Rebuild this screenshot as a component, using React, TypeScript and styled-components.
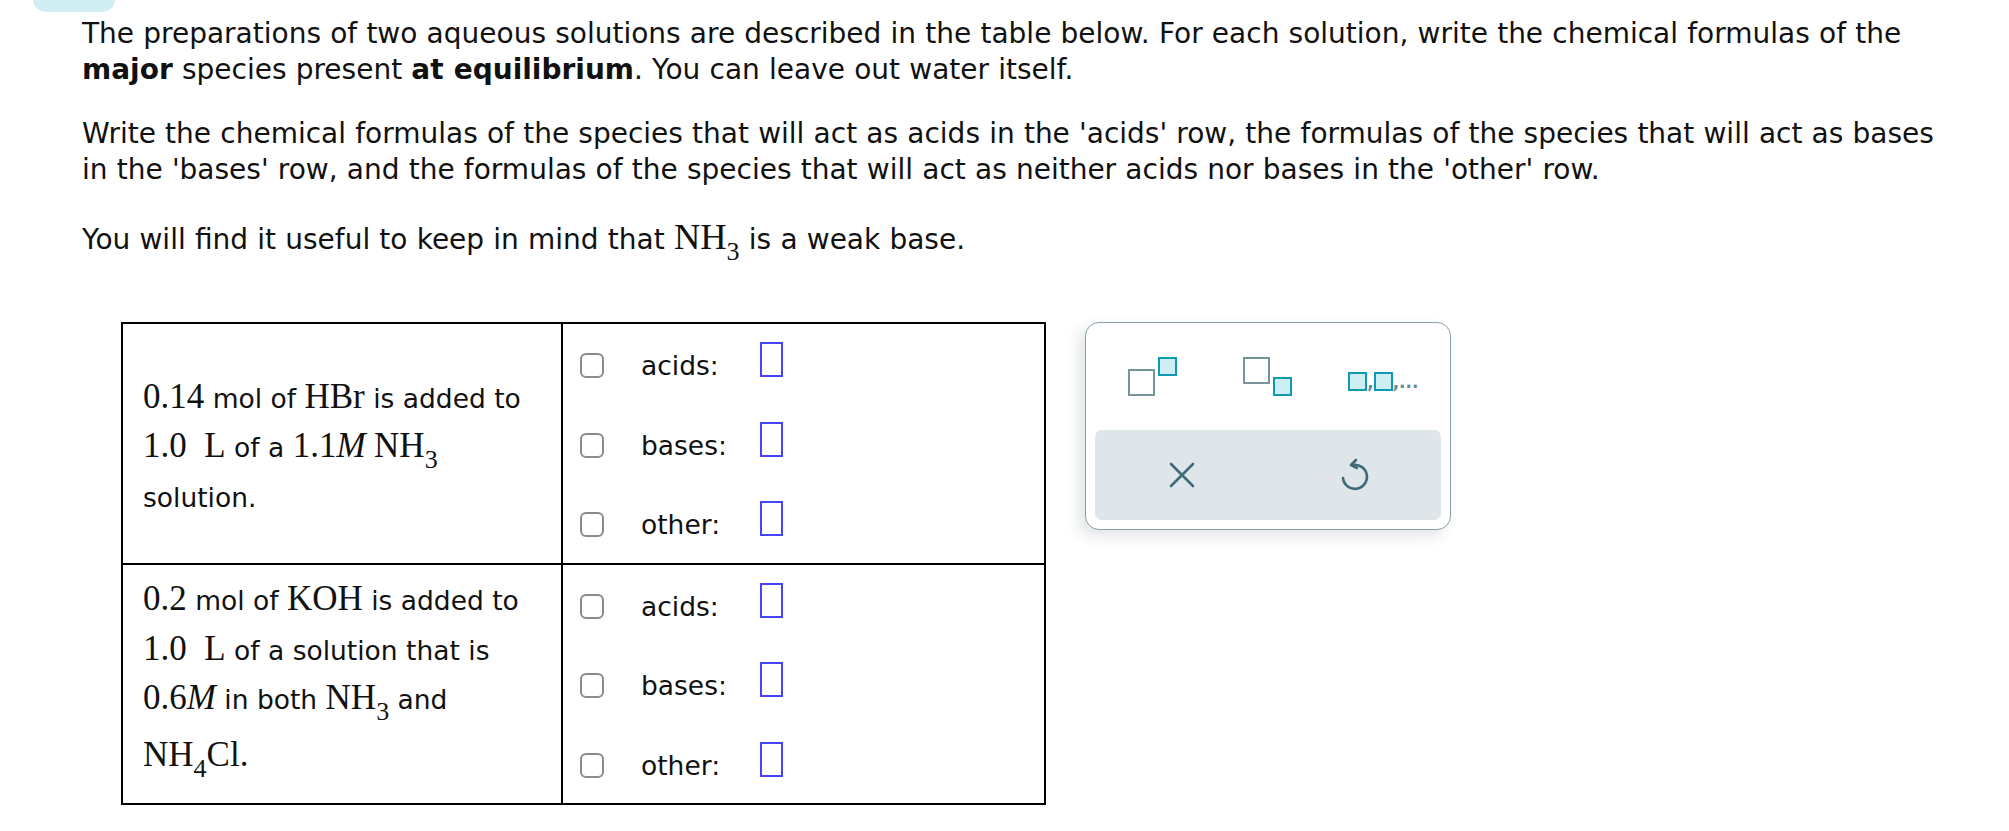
import styled, { createGlobalStyle } from 'styled-components'

const GlobalStyle = createGlobalStyle`
  body {
    margin: 0;
    background: #fff;
    color: #111;
    font-family: 'DejaVu Sans', Verdana, sans-serif;
  }
`

const Page = styled.div`
  display: flex;
  flex-direction: column;
`

const Tab = styled.div`
  width: 82px;
  height: 12px;
  margin-left: 33px;
  background: #d0eef3;
  border-radius: 0 0 14px 14px / 0 0 12px 12px;
`

const Math = styled.span<{ $it?: boolean }>`
  font-family: 'Liberation Serif', 'Times New Roman', serif;
  font-size: 35px;
  line-height: 1;
  font-style: ${(p) => (p.$it ? 'italic' : 'normal')};
  word-spacing: 0;
`

// tall formula that pushes its line down a little, as the typeset block does
const TallMath = styled(Math)`
  display: inline-block;
  padding-top: 12px;
`

const Sub = styled.sub`
  font-size: 26px;
  vertical-align: -11px;
  line-height: 0;
`

const Prompt = styled.div`
  padding-left: 82px;
  padding-top: 4px;
  width: 1870px;
  font-size: 28px;
  line-height: 36px;
  word-spacing: 0.3px;
  p {
    margin: 0 0 28px;
  }
  p:last-child {
    margin-top: 31px;
  }
  ${Math} {
    font-size: 36.5px;
  }
`

const Work = styled.div`
  display: flex;
  align-items: flex-start;
  gap: 39px;
  margin: 36px 0 0 121px;
`

const Table = styled.table`
  border-collapse: collapse;
  table-layout: fixed;
  font-size: 26.5px;
  td {
    border: 2px solid #000;
    padding: 0;
    vertical-align: middle;
  }
`

const Prep = styled.td<{ $nudge: 'down' | 'up' }>`
  width: 398px;
  padding: ${(p) => (p.$nudge === 'down' ? '9px 20px 0' : '0 20px 10px')} !important;
  line-height: 49.5px;
`

const Answers = styled.td`
  width: 481px;
`

const Option = styled.div`
  display: flex;
  align-items: center;
  box-sizing: border-box;
  height: 79.5px;
  padding: 4px 0 0 17px;
`

const Check = styled.span`
  width: 24px;
  height: 25px;
  box-sizing: border-box;
  border: 2px solid #8b8b8b;
  border-radius: 6px;
  margin-right: 37px;
`

const Label = styled.span`
  width: 119px;
`

const Slot = styled.span`
  width: 23px;
  height: 35px;
  box-sizing: border-box;
  border: 2px solid #4545ff;
  margin-bottom: 12px;
`

const Palette = styled.div`
  width: 366px;
  height: 208px;
  box-sizing: border-box;
  border: 1.5px solid #86a1a8;
  border-radius: 14px;
  background: #fff;
  box-shadow: -6px 6px 14px rgba(70, 90, 100, 0.16);
  display: flex;
  flex-direction: column;
  padding: 0 9px 9px;
`

const Tools = styled.div`
  height: 107px;
  display: grid;
  grid-template-columns: repeat(3, 1fr);
  align-items: center;
  justify-items: center;
`

const Glyph = styled.span<{ $align: 'sup' | 'sub' }>`
  display: inline-flex;
  gap: 3px;
  height: 39px;
  align-items: ${(p) => (p.$align === 'sup' ? 'flex-end' : 'flex-start')};
  & > span:last-child {
    align-self: ${(p) => (p.$align === 'sup' ? 'flex-start' : 'flex-end')};
  }
`

const Box = styled.span<{ $small?: boolean }>`
  display: inline-block;
  box-sizing: border-box;
  width: ${(p) => (p.$small ? 19 : 27)}px;
  height: ${(p) => (p.$small ? 19 : 27)}px;
  border: 2.6px solid ${(p) => (p.$small ? '#0b9bb3' : '#77939b')};
  background: ${(p) => (p.$small ? '#cdeef3' : '#fff')};
`

const ListGlyph = styled.span`
  display: inline-flex;
  align-items: flex-end;
  font-size: 17px;
  font-weight: bold;
  color: #6b8a92;
  line-height: 1;
  margin-top: 10px;
`

const Actions = styled.div`
  flex: 1;
  display: grid;
  grid-template-columns: 1fr 1fr;
  align-items: center;
  justify-items: center;
  background: #dfe6e9;
  border-radius: 7px;
`

const IconButton = styled.button`
  border: 0;
  background: transparent;
  padding: 0;
  display: flex;
  color: #3f6b78;
`

const CloseIcon = () => (
  <svg width="26" height="26" viewBox="0 0 26 26" fill="none" stroke="currentColor" strokeWidth="2.6" strokeLinecap="round">
    <path d="M2 2 L24 24 M24 2 L2 24" />
  </svg>
)

const UndoIcon = () => (
  <svg width="30" height="34" viewBox="0 0 30 34" fill="none" stroke="currentColor" strokeWidth="2.6" strokeLinecap="round" strokeLinejoin="round">
    <path d="M13 7 A12 12 0 1 1 3 20" />
    <path d="M16 2 L11 7 L17 10" />
  </svg>
)

const options = ['acids:', 'bases:', 'other:']

const AnswerCell = () => (
  <Answers>
    {options.map((o) => (
      <Option key={o}>
        <Check />
        <Label>{o}</Label>
        <Slot />
      </Option>
    ))}
  </Answers>
)

const App = () => {
  return (
    <>
      <GlobalStyle />
      <Page>
        <Tab />
        <Prompt>
          <p>
            The preparations of two aqueous solutions are described in the table below. For each solution, write the
            chemical formulas of the <b>major</b> species present <b>at equilibrium</b>. You can leave out water itself.
          </p>
          <p>
            Write the chemical formulas of the species that will act as acids in the 'acids' row, the formulas of the
            species that will act as bases in the 'bases' row, and the formulas of the species that will act as neither
            acids nor bases in the 'other' row.
          </p>
          <p>
            You will find it useful to keep in mind that{' '}
            <Math>
              NH<Sub>3</Sub>
            </Math>{' '}
            is a weak base.
          </p>
        </Prompt>
        <Work>
          <Table>
            <tbody>
              <tr>
                <Prep $nudge="down">
                  <Math>0.14</Math> mol of <Math>HBr</Math> is added to <Math>1.0&nbsp;&nbsp;L</Math> of a{' '}
                  <Math>1.1</Math>
                  <Math $it>M</Math>{' '}
                  <Math>
                    NH<Sub>3</Sub>
                  </Math>{' '}
                  solution.
                </Prep>
                <AnswerCell />
              </tr>
              <tr>
                <Prep $nudge="up">
                  <Math>0.2</Math> mol of <Math>KOH</Math> is added to <Math>1.0&nbsp;&nbsp;L</Math> of a solution that is{' '}
                  <Math>0.6</Math>
                  <Math $it>M</Math> in both{' '}
                  <Math>
                    NH<Sub>3</Sub>
                  </Math>{' '}
                  and{' '}
                  <TallMath>
                    NH<Sub>4</Sub>Cl.
                  </TallMath>
                </Prep>
                <AnswerCell />
              </tr>
            </tbody>
          </Table>
          <Palette>
            <Tools>
              <Glyph $align="sup">
                <Box />
                <Box $small />
              </Glyph>
              <Glyph $align="sub">
                <Box />
                <Box $small />
              </Glyph>
              <ListGlyph>
                <Box $small />,<Box $small />,...
              </ListGlyph>
            </Tools>
            <Actions>
              <IconButton aria-label="clear">
                <CloseIcon />
              </IconButton>
              <IconButton aria-label="undo">
                <UndoIcon />
              </IconButton>
            </Actions>
          </Palette>
        </Work>
      </Page>
    </>
  )
}

export default App
